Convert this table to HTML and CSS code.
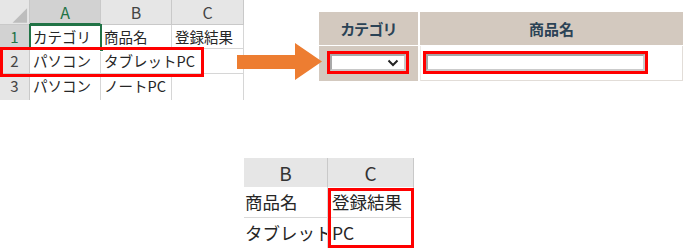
FILE: index.html
```html
<!DOCTYPE html>
<html lang="ja">
<head>
<meta charset="utf-8">
<link rel="stylesheet" href="styles.css">
</head>
<body>
<div class="top">
  <div class="sheet1">
    <div class="c hd corner"><svg width="30" height="25" viewBox="0 0 30 25"><polygon points="13,23 28,23 28,8" fill="#bdbdbd"/></svg></div>
    <div class="c hd sel">A</div>
    <div class="c hd">B</div>
    <div class="c hd">C</div>

    <div class="c rn sel">1</div>
    <div class="c">カテゴリ</div>
    <div class="c">商品名</div>
    <div class="c">登録結果</div>

    <div class="c rn">2</div>
    <div class="c">パソコン</div>
    <div class="c over">タブレットPC</div>
    <div class="c"></div>

    <div class="c rn last">3</div>
    <div class="c last">パソコン</div>
    <div class="c last">ノートPC</div>
    <div class="c last"></div>

    <div class="cursor"><span class="handle"></span></div>
    <div class="redbox r1"></div>
  </div>

  <div class="arrow">
    <svg width="86" height="37" viewBox="0 0 86 37"><polygon points="1,12 59,12 59,0 86,18.5 59,37 59,26 1,26" fill="#ed7d31"/></svg>
  </div>

  <div class="form">
    <div class="fh">カテゴリ</div>
    <div class="fh">商品名</div>
    <div class="fc cat">
      <div class="rb sel-rb">
        <div class="select">
          <svg width="12" height="8" viewBox="0 0 12 8"><polyline points="1.5,1.5 6,6 10.5,1.5" fill="none" stroke="#222" stroke-width="2"/></svg>
        </div>
      </div>
    </div>
    <div class="fc name">
      <div class="rb inp-rb"><div class="input"></div></div>
    </div>
  </div>
</div>

<div class="sheet2">
  <div class="d dh">B</div>
  <div class="d dh">C</div>
  <div class="d">商品名</div>
  <div class="d">登録結果</div>
  <div class="d clip last">タブレットPC</div>
  <div class="d last">PC</div>
  <div class="redbox r2"></div>
</div>
</body>
</html>
```

FILE: styles.css
```css
* { box-sizing: border-box; }
html, body { margin: 0; padding: 0; }
body {
  width: 688px;
  height: 248px;
  overflow: hidden;
  background: #fff;
  font-family: "Noto Sans CJK JP", "Noto Sans", sans-serif;
  color: #262626;
}

.top {
  display: flex;
  align-items: flex-start;
  height: 158px;
}

/* ---------- spreadsheet 1 ---------- */
.sheet1 {
  position: relative;
  display: grid;
  grid-template-columns: 30px 71px 71px 72px;
  grid-template-rows: 25px 24px 25px 26px;
  width: 244px;
  flex: none;
}
.c {
  border-right: 1px solid #d6d6d6;
  border-bottom: 1px solid #d6d6d6;
  font-size: 14.5px;
  line-height: 23px;
  padding-left: 3px;
  white-space: nowrap;
  overflow: hidden;
}
.c.last { border-bottom: none; }
.c.over { overflow: visible; border-right: none; position: relative; z-index: 1; }
.c.hd {
  background: #e6e6e6;
  border-right-color: #c9c9c9;
  border-bottom-color: #c9c9c9;
  text-align: center;
  padding-left: 0;
  font-size: 16px;
  line-height: 25px;
  color: #444;
}
.c.corner { padding: 0; display: flex; }
.c.rn {
  background: #e6e6e6;
  border-right-color: #c9c9c9;
  border-bottom-color: #c9c9c9;
  text-align: center;
  padding-left: 0;
  font-size: 15px;
  color: #444;
}
.c.sel { background: #d2d2d2; color: #217346; }
.c.hd.sel { border-bottom: 2px solid #217346; }

.cursor {
  position: absolute;
  left: 29px;
  top: 24px;
  width: 73px;
  height: 26px;
  border: 2px solid #217346;
  pointer-events: none;
}
.cursor .handle {
  position: absolute;
  right: -4px;
  bottom: -4px;
  width: 5px;
  height: 5px;
  background: #217346;
  border: 1px solid #fff;
}

.redbox {
  position: absolute;
  border: 3px solid #ff0000;
  pointer-events: none;
  z-index: 2;
}
.redbox.r1 { left: 0; top: 47px; width: 204px; height: 30px; }

/* ---------- arrow ---------- */
.arrow {
  flex: none;
  margin: 43px -3px 0 -8px;
  height: 37px;
  position: relative;
  z-index: 3;
}
.arrow svg { display: block; }

/* ---------- form table ---------- */
.form {
  flex: none;
  margin-top: 12px;
  width: 364px;
  display: grid;
  grid-template-columns: 99px 1fr;
  grid-template-rows: 33px 35px;
  column-gap: 2px;
  row-gap: 1px;
}
.fh {
  background: #d3c9bf;
  color: #2b4356;
  font-weight: bold;
  font-size: 15px;
  text-align: center;
  line-height: 33px;
  font-feature-settings: "palt";
}
.fc.cat { background: #d3c9bf; padding: 5px 0 0 8px; }
.fc.name {
  background: #fff;
  border-right: 1px solid #e2ddd8;
  border-bottom: 1px solid #e2ddd8;
  border-left: 1px solid #eeeae6;
  padding: 5px 0 0 2px;
}
.rb {
  border: 3px solid #ff0000;
  height: 23px;
}
.sel-rb { width: 82px; }
.inp-rb { width: 225px; }
.select {
  height: 17px;
  background: #fff;
  border: 2px solid #a9a9a9;
  border-bottom-color: #c8c8c8;
  border-right-color: #c8c8c8;
  display: flex;
  align-items: center;
  justify-content: flex-end;
  padding-right: 5px;
}
.select svg { display: block; }
.input {
  height: 17px;
  background: #fff;
  border: 2px solid #a6a6a6;
  border-bottom-color: #cbcbcb;
  border-right-color: #cbcbcb;
}

/* ---------- spreadsheet 2 ---------- */
.sheet2 {
  position: relative;
  margin-left: 244px;
  width: 170px;
  display: grid;
  grid-template-columns: 84px 86px;
  grid-template-rows: 29px 31px 30px;
}
.d {
  font-size: 17.5px;
  line-height: 30px;
  padding-left: 1px;
  white-space: nowrap;
  overflow: hidden;
  border-bottom: 1px solid #d9d9d9;
  border-right: 1px solid #d9d9d9;
}
.d.last { border-bottom: none; }
.d.dh {
  background: #e6e6e6;
  text-align: center;
  padding-left: 0;
  font-size: 19px;
  line-height: 29px;
  color: #333;
  border-right-color: #c9c9c9;
  border-bottom: none;
}
.d:nth-child(even) { padding-left: 4px; }
.d.dh:nth-child(even) { padding-left: 0; }
.redbox.r2 { left: 84px; top: 30px; width: 86px; height: 60px; }
```
